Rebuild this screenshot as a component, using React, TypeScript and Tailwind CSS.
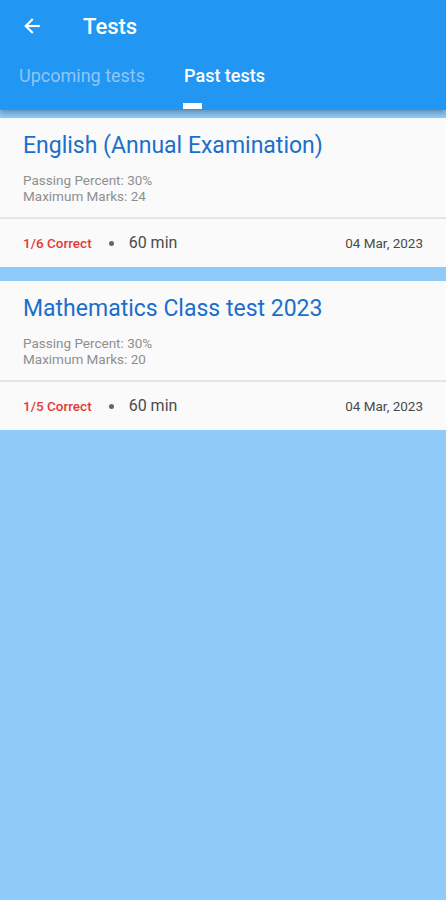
import React from "react";

const tests = [
  { title: "English (Annual Examination)", pass: "30%", max: "24", correct: "1/6 Correct", dur: "60 min", date: "04 Mar, 2023" },
  { title: "Mathematics Class test 2023", pass: "30%", max: "20", correct: "1/5 Correct", dur: "60 min", date: "04 Mar, 2023" },
];

export default function App() {
  return (
    <div className="w-[446px] h-[900px] bg-[#90CAF9] flex flex-col" style={{ fontFamily: "Roboto, 'Noto Sans', sans-serif" }}>
      <div className="bg-[#2196F3] h-[110px] flex flex-col shadow-[0_3px_6px_rgba(0,0,0,0.3)] relative z-10">
        <div className="h-[52px] flex items-center">
          <div className="w-[83px] pl-[22px] flex items-center">
            <svg width="20" height="20" viewBox="0 0 24 24" fill="none" stroke="white" strokeWidth="2.6" strokeLinecap="square">
              <path d="M20 12H5" />
              <path d="M12 4.5L4.5 12L12 19.5" />
            </svg>
          </div>
          <span className="text-white text-[22px] font-medium">Tests</span>
        </div>
        <div className="flex h-[58px]">
          <div className="pl-[19px] pr-[39px] flex flex-col items-center pt-[12px]">
            <span className="text-[18px] text-[#8fc6f7] leading-[24px]">Upcoming tests</span>
          </div>
          <div className="flex flex-col items-start pt-[12px]">
            <span className="text-[18px] font-medium text-white leading-[24px]">Past tests</span>
            <div className="w-[19px] h-[6px] bg-white mt-[15px] -ml-[1px]" />
          </div>
        </div>
      </div>
      <div className="flex flex-col gap-[14px] pt-[8px]">
        {tests.map((t) => (
          <div key={t.title} className="bg-[#fafafa] flex flex-col">
            <div className="px-[23px] pt-[14px] pb-[13px]">
              <div className="text-[23px] text-[#1a6fcc] leading-[28px]">{t.title}</div>
              <div className="mt-[12px] text-[13.5px] text-[#8f8f8f] leading-[16px]">
                <div>Passing Percent: {t.pass}</div>
                <div>Maximum Marks: {t.max}</div>
              </div>
            </div>
            <div className="h-[2px] bg-[#e4e4e4]" />
            <div className="h-[48px] px-[23px] flex items-center">
              <span className="text-[13.5px] font-medium text-[#e53935]">{t.correct}</span>
              <span className="w-[5px] h-[5px] rounded-full bg-[#666] ml-[17px] mr-[15px]" />
              <span className="text-[16px] text-[#4a4a4a]">{t.dur}</span>
              <span className="ml-auto text-[13.5px] text-[#4a4a4a]">{t.date}</span>
            </div>
          </div>
        ))}
      </div>
    </div>
  );
}
